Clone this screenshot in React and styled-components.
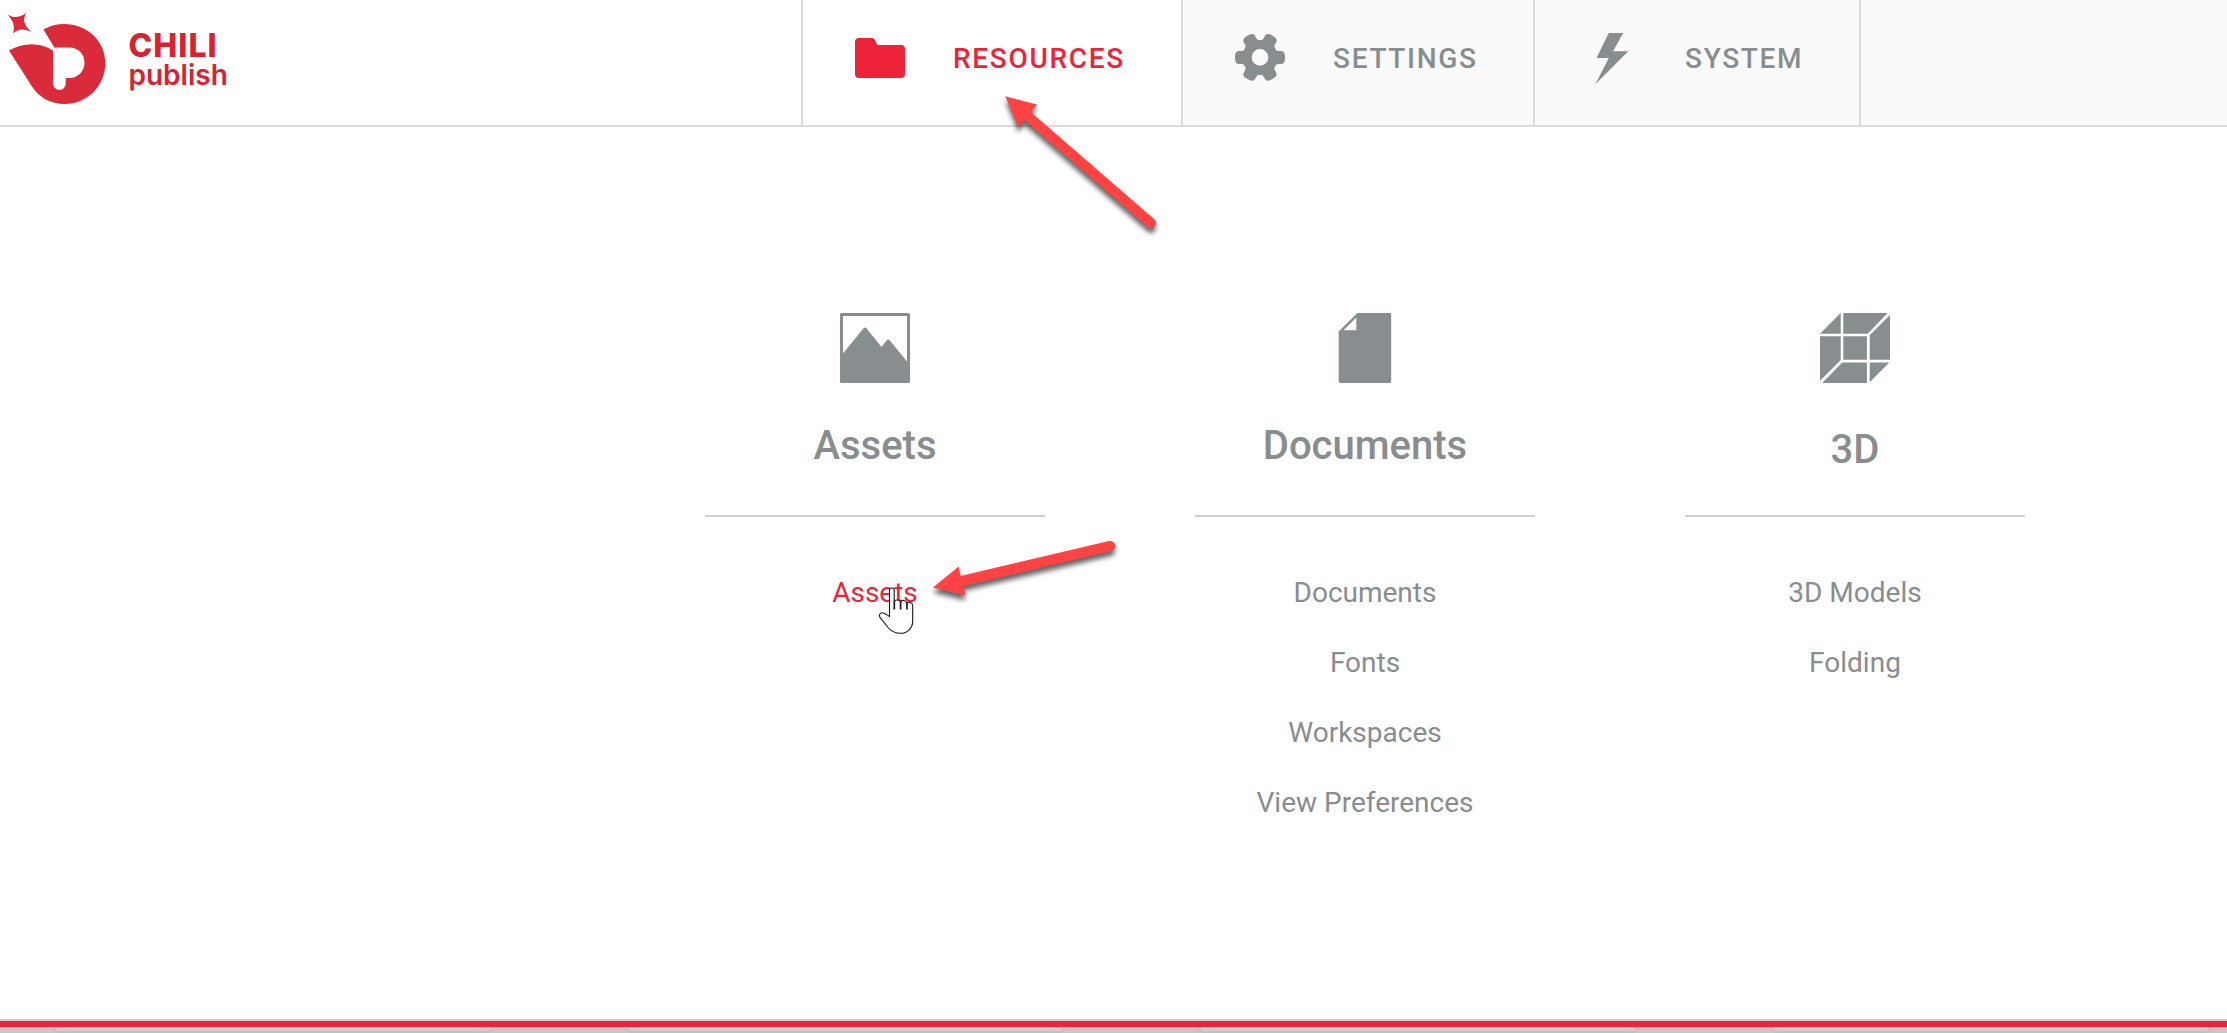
import React from "react";
import styled, { createGlobalStyle } from "styled-components";

const RED = "#ee2339";
const GREY = "#888d90";

const GlobalStyle = createGlobalStyle`
  *, *::before, *::after { box-sizing: border-box; }
  html, body { margin: 0; padding: 0; background: #fff; overflow: hidden; }
  body { font-family: Roboto, "Liberation Sans", sans-serif; color: ${GREY}; }
`;

const Page = styled.div`
  position: relative;
  display: flex;
  flex-direction: column;
  width: 100%;
  height: 1033px;
  overflow: hidden;
  background: #fff;
`;

const Header = styled.header`
  display: flex;
  flex: none;
  height: 127px;
  border-bottom: 2px solid #dbdbdb;
  background: #fafafa;
`;

const Brand = styled.a`
  display: flex;
  flex: none;
  width: 801px;
  background: #fff;
`;

const BrandMark = styled.svg`
  display: block;
  flex: none;
`;

const BrandName = styled.div`
  display: flex;
  flex-direction: column;
  padding: 28px 0 0 18.5px;
  font-family: Inter, sans-serif;
  color: #d92231;
`;

const BrandTop = styled.span`
  font-size: 32px;
  line-height: 35px;
  font-weight: 800;
  letter-spacing: 1px;
`;

const BrandBottom = styled.span`
  font-size: 28px;
  line-height: 24px;
  font-weight: 600;
  letter-spacing: 0;
`;

const Tabs = styled.nav`
  display: flex;
  border-left: 2px solid #dbdbdb;
`;

const Tab = styled.a`
  display: flex;
  align-items: center;
  gap: 48px;
  width: ${(p) => p.$width}px;
  padding: 0 0 9px 52px;
  border-right: 2px solid #dbdbdb;
  background: ${(p) => (p.$active ? "#fff" : "#fafafa")};
  color: ${(p) => (p.$active ? RED : GREY)};
  font-size: 28px;
  font-weight: 500;
  letter-spacing: 1.68px;
  text-transform: uppercase;
  white-space: nowrap;
`;

const TabIcon = styled.svg`
  display: block;
  flex: none;
  width: 50px;
  height: 56px;
  fill: currentColor;
`;

const Main = styled.main`
  display: flex;
  flex: 1;
  gap: 150px;
  padding: 186px 0 0 705px;
`;

const Column = styled.section`
  display: flex;
  flex-direction: column;
  align-items: center;
  width: 340px;
`;

const ColumnIcon = styled.svg`
  display: block;
  width: 70px;
  height: 70px;
  fill: currentColor;
`;

const ColumnHead = styled.div`
  display: flex;
  flex-direction: column;
  align-items: center;
  gap: ${(p) => (p.$low ? 37 : 33)}px;
  width: 100%;
  height: 204px;
  border-bottom: 2px solid #cfd1d1;
`;

const Title = styled.h2`
  margin: 0;
  font-size: 40px;
  line-height: 60px;
  font-weight: 500;
`;

const LinkList = styled.ul`
  list-style: none;
  margin: 41px 0 0;
  padding: 0;
`;

const LinkItem = styled.li`
  font-size: 28px;
  line-height: 70px;
  text-align: center;
  color: ${(p) => (p.$active ? RED : "inherit")};
`;

const Footer = styled.footer`
  flex: none;
  height: 14px;
  border-top: 2px solid #cfcfcf;
  background: #c7c7c7;
  overflow: hidden;
`;

const RedBar = styled.div`
  height: 6px;
  background: ${RED};
`;

const CardRow = styled.div`
  display: flex;
  gap: 133px;
  padding-left: 53px;
`;

const CardEdge = styled.div`
  flex: none;
  width: 439.7px;
  height: 6px;
  border: 2px solid #c0c0c0;
  border-top: 0;
  border-radius: 0 0 7px 7px;
  background: #d0d0d0;
`;

const Overlay = styled.svg`
  position: absolute;
  left: ${(p) => p.$x}px;
  top: ${(p) => p.$y}px;
  overflow: visible;
  pointer-events: none;
`;

const Arrow = styled(Overlay)`
  fill: #ff4343;
  filter: drop-shadow(0 5px 2.5px rgba(0, 0, 0, 0.6));
`;

const FolderIcon = () => (
  <TabIcon viewBox="0 0 50 56">
    <path d="M4 8H16.5C18.2 8 19 8.5 19.8 9.8L22 14.2C22.2 14.8 22.6 15 23.2 15H46a4 4 0 0 1 4 4V44a4 4 0 0 1-4 4H4a4 4 0 0 1-4-4V12A4 4 0 0 1 4 8Z" />
  </TabIcon>
);

const GearIcon = () => (
  <TabIcon viewBox="-25 -27.4 50 56">
    {[0, 60, 120, 180, 240, 300].map((a) => (
      <path
        key={a}
        transform={`rotate(${a})`}
        d="M12 -13C14.5 -10 15 -6.5 18.5 -6.5H20.5C24 -6.5 25 -4.5 25 0C25 4.5 24 6.5 20.5 6.5H18.5C15 6.5 14.5 10 12 13Z"
      />
    ))}
    <path
      fillRule="evenodd"
      d="M-17.5 0A17.5 17.5 0 1 1 17.5 0A17.5 17.5 0 1 1-17.5 0ZM-8.3 0A8.3 8.3 0 1 0 8.3 0A8.3 8.3 0 1 0-8.3 0Z"
    />
  </TabIcon>
);

const BoltIcon = () => (
  <TabIcon viewBox="0 0 50 56">
    <path d="M21.7 3H36.2L26 21.3H41.3L8.3 54.3L21.8 28H9.5Z" />
  </TabIcon>
);

const PictureIcon = () => (
  <ColumnIcon viewBox="0 0 70 70">
    <path
      fillRule="evenodd"
      d="M1.5 0H68.5A1.5 1.5 0 0 1 70 1.5V68.5A1.5 1.5 0 0 1 68.5 70H1.5A1.5 1.5 0 0 1 0 68.5V1.5A1.5 1.5 0 0 1 1.5 0ZM3 3V40.5L23.6 15.3Q25 13.6 26.4 15.3L41.5 34L46.6 27.4Q48.2 25.5 49.8 27.4L67 48.5V3Z"
    />
  </ColumnIcon>
);

const DocumentIcon = () => (
  <ColumnIcon viewBox="0 0 70 70">
    <path
      fillRule="evenodd"
      d="M27.3 0H59.8A1.5 1.5 0 0 1 61.2 1.4V68.6A1.5 1.5 0 0 1 59.8 70H10.1A1.5 1.5 0 0 1 8.7 68.6V18.6ZM26.3 4.6L13.6 17.3H25.4A1 1 0 0 0 26.3 16.4Z"
    />
  </ColumnIcon>
);

const CubeIcon = () => (
  <ColumnIcon viewBox="0 0 70 70">
    <path d="M20.7 0V20.7H0ZM23.3 0H67.7L47.7 20.7H23.3ZM70 2V46.7H49.7V22.3ZM0 23.3H20.7V47.3L0 67.8ZM23.3 23.3H46.9V46.7H23.3ZM22.3 49.6H46.9V70H2.2ZM49.7 49.6H69.3L49.7 69.3Z" />
  </ColumnIcon>
);

const ICONS = {
  folder: FolderIcon,
  gear: GearIcon,
  bolt: BoltIcon,
  picture: PictureIcon,
  document: DocumentIcon,
  cube: CubeIcon,
};

const TABS = [
  { label: "Resources", icon: "folder", width: 380, active: true },
  { label: "Settings", icon: "gear", width: 352 },
  { label: "System", icon: "bolt", width: 326 },
];

const COLUMNS = [
  { title: "Assets", icon: "picture", links: ["Assets"], active: "Assets" },
  {
    title: "Documents",
    icon: "document",
    links: ["Documents", "Fonts", "Workspaces", "View Preferences"],
  },
  { title: "3D", icon: "cube", links: ["3D Models", "Folding"], low: true },
];

export default function App() {
  return (
    <Page>
      <GlobalStyle />
      <Header>
        <Brand>
          <BrandMark width="110" height="110" viewBox="0 0 110 110" fill="#d92b39">
            <path d="M7.3 14.3C13 18.5 19.5 18 26.3 12.8C22.5 19.5 23.5 25 31.5 32C24 28.5 18.5 28.5 13 33.5C15 27 14 21.5 7.3 14.3Z" />
            <path d="M43.5 29.5C69 14.5 105.3 31 105.3 63C105.3 86 87 104 65 104C50 104 39.5 97.5 32 86.5L9 50.5C24 42 40 42 53 50.5V83C53 87 56 90 59.5 90C63 90 65.7 87 65.7 83V78H71C79 77 84.5 70.5 84.5 62.5C84.5 54 78 47.5 69.5 47.5H58C56 47.5 55.5 47.6 54.5 47.8Z" />
          </BrandMark>
          <BrandName>
            <BrandTop>CHILI</BrandTop>
            <BrandBottom>publish</BrandBottom>
          </BrandName>
        </Brand>
        <Tabs>
          {TABS.map((t) => {
            const Icon = ICONS[t.icon];
            return (
              <Tab key={t.label} $width={t.width} $active={t.active}>
                <Icon />
                <span>{t.label}</span>
              </Tab>
            );
          })}
        </Tabs>
      </Header>
      <Main>
        {COLUMNS.map((c) => {
          const Icon = ICONS[c.icon];
          return (
            <Column key={c.title}>
              <ColumnHead $low={c.low}>
                <Icon />
                <Title>{c.title}</Title>
              </ColumnHead>
              <LinkList>
                {c.links.map((l) => (
                  <LinkItem key={l} $active={c.active === l}>
                    {l}
                  </LinkItem>
                ))}
              </LinkList>
            </Column>
          );
        })}
      </Main>
      <Footer>
        <RedBar />
        <CardRow>
          <CardEdge />
          <CardEdge />
          <CardEdge />
          <CardEdge />
        </CardRow>
      </Footer>
      <Arrow $x={1005} $y={96} width="152" height="134">
        <path d="M0.3 0.3L32 8.5L26 16.3L149.3 123.2A5 5 0 0 1 142.7 130.8L19.5 24L13.3 31Z" />
      </Arrow>
      <Arrow $x={933} $y={540} width="184" height="60">
        <path d="M0 47.5L25.7 26.5L27.5 36L176 1.1A5 5 0 0 1 178.3 10.9L30.5 46L32.5 55.5Z" />
      </Arrow>
      <Overlay $x={878} $y={587} width="36" height="48">
        <path
          d="M11.5 29.5V3.5C11.5 0.2 16.2 0.2 16.2 3.5V14.5C17 12.3 21.8 12.5 22.5 15C24.5 12.5 28 13 28.8 16C31 14.5 34.7 15 34.7 19V34C34.7 41 29.5 46.3 22.5 46.3C17.5 46.3 13.5 44.5 10.5 41L2 30.3C0.5 28.3 2 25.5 4.5 25.7C7 26 9 28 11.5 29.5Z"
          fill="#fff"
          stroke="#15152a"
          strokeWidth="1.1"
        />
        <path d="M16.3 14V22.5M22.6 15V22.5M29 16V22.5" fill="none" stroke="#15152a" strokeWidth="1.7" />
      </Overlay>
    </Page>
  );
}
